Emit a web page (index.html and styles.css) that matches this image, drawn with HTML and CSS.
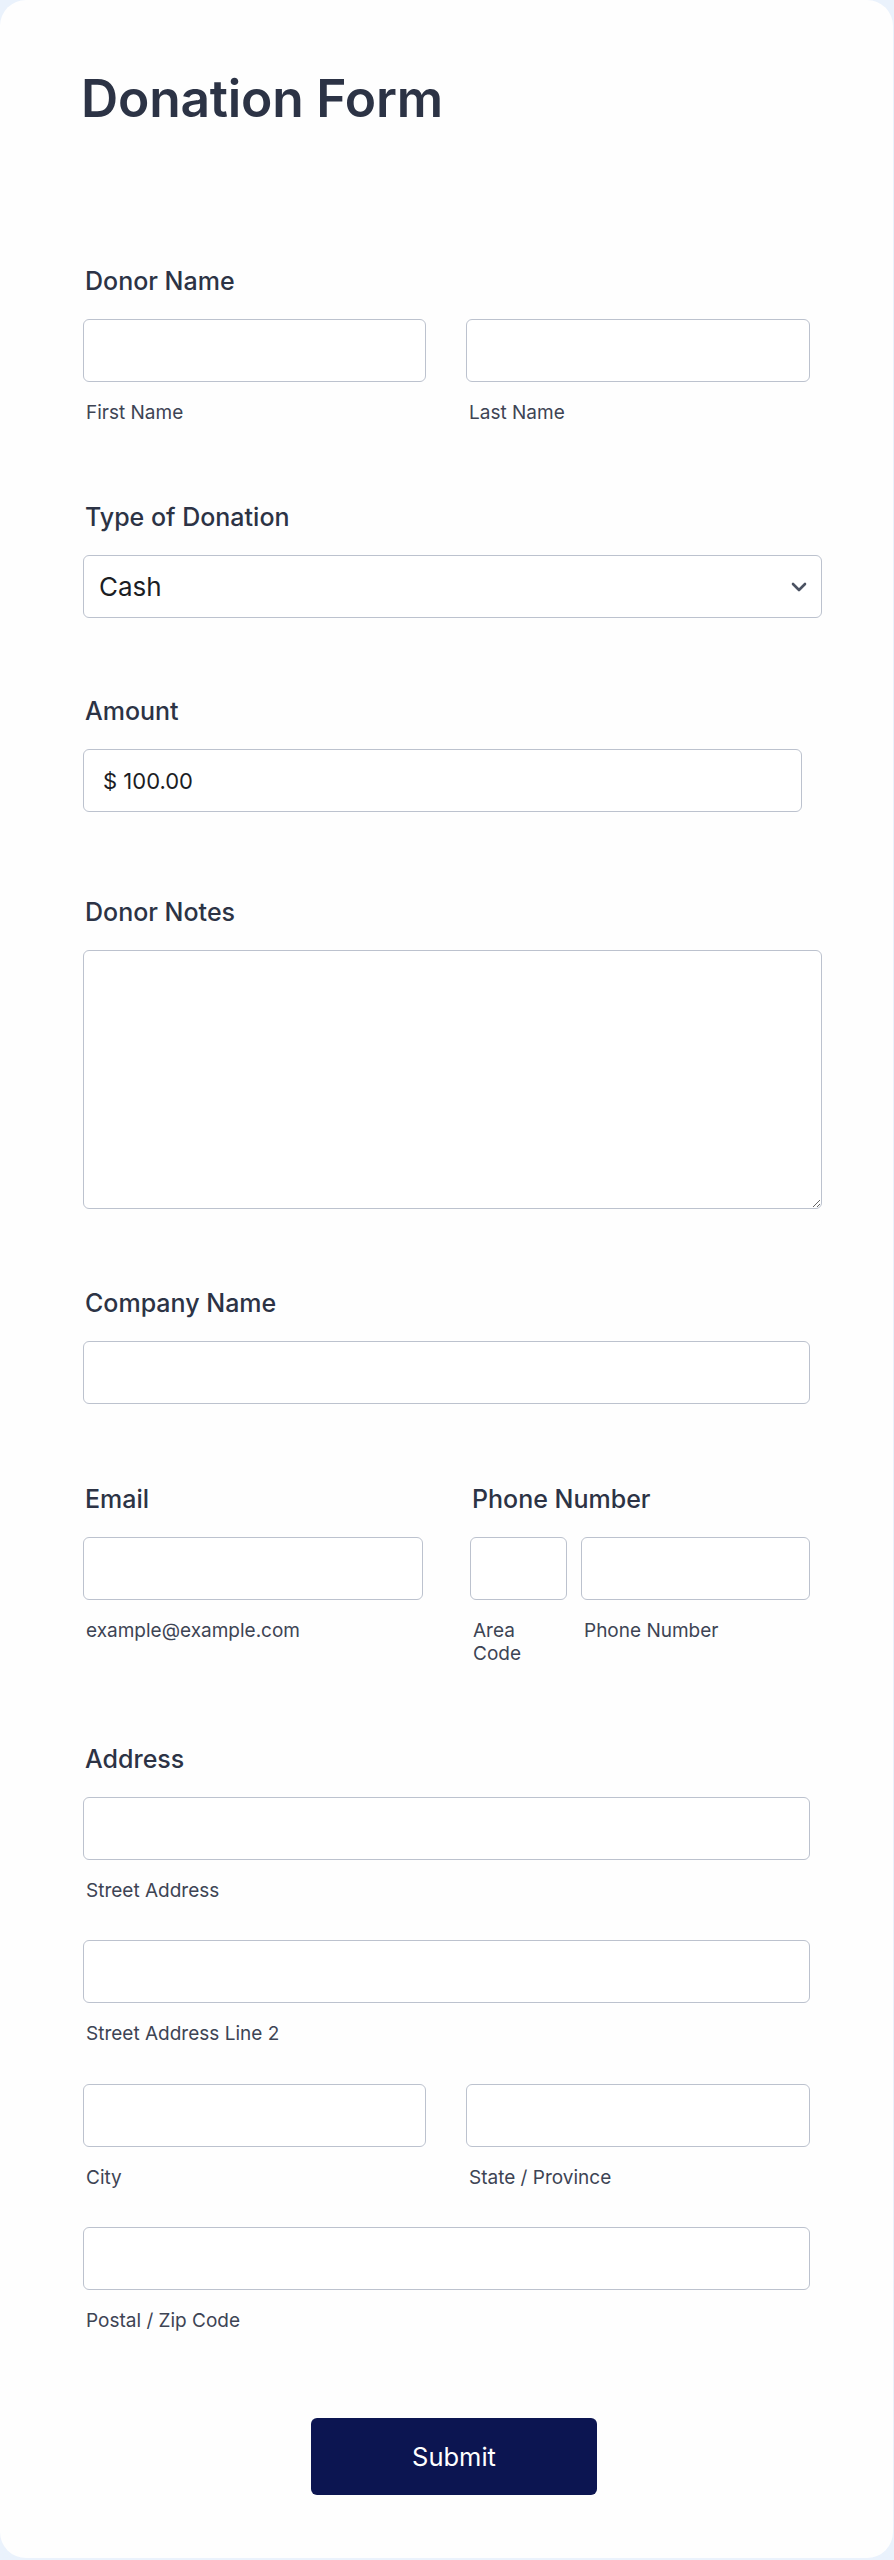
FILE: index.html
```html
<!DOCTYPE html>
<html lang="en">
<head>
<meta charset="utf-8">
<title>Donation Form</title>
<link rel="stylesheet" href="styles.css">
</head>
<body>
<form class="card">
  <h1 class="title">Donation Form</h1>

  <div class="field f-name">
    <label class="label">Donor Name</label>
    <div class="row two">
      <div class="col"><input class="input" type="text"><span class="sub">First Name</span></div>
      <div class="col"><input class="input" type="text"><span class="sub">Last Name</span></div>
    </div>
  </div>

  <div class="field f-type">
    <label class="label">Type of Donation</label>
    <div class="select-wrap">
      <select class="select"><option>Cash</option></select>
      <svg class="chev" width="16" height="10" viewBox="0 0 16 10"><path d="M2 2l6 6 6-6" fill="none" stroke="#4b5262" stroke-width="2.6" stroke-linecap="round" stroke-linejoin="round"/></svg>
    </div>
  </div>

  <div class="field f-amount">
    <label class="label">Amount</label>
    <input class="input amount" type="text" value="$ 100.00">
  </div>

  <div class="field f-notes">
    <label class="label">Donor Notes</label>
    <textarea class="textarea"></textarea>
  </div>

  <div class="field f-company">
    <label class="label">Company Name</label>
    <input class="input wide" type="text">
  </div>

  <div class="field f-contact">
    <div class="contact">
      <div class="email">
        <label class="label">Email</label>
        <input class="input" type="email">
        <span class="sub">example@example.com</span>
      </div>
      <div class="phone">
        <label class="label">Phone Number</label>
        <div class="phone-row">
          <div class="area"><input class="input" type="tel"><span class="sub">Area Code</span></div>
          <div class="num"><input class="input" type="tel"><span class="sub">Phone Number</span></div>
        </div>
      </div>
    </div>
  </div>

  <div class="field f-address">
    <label class="label">Address</label>
    <div class="addr-line"><input class="input wide" type="text"><span class="sub">Street Address</span></div>
    <div class="addr-line"><input class="input wide" type="text"><span class="sub">Street Address Line 2</span></div>
    <div class="addr-line row two">
      <div class="col"><input class="input" type="text"><span class="sub">City</span></div>
      <div class="col"><input class="input" type="text"><span class="sub">State / Province</span></div>
    </div>
    <div class="addr-line"><input class="input wide" type="text"><span class="sub">Postal / Zip Code</span></div>
  </div>

  <div class="submit-row">
    <button class="submit" type="button">Submit</button>
  </div>
</form>
</body>
</html>
```
FILE: styles.css
```css
* { box-sizing: border-box; }

html, body {
  margin: 0;
  padding: 0;
  background: #eaf2fc;
}

body {
  font-family: Inter, "Noto Sans", "Liberation Sans", sans-serif;
  color: #2c3345;
}

.card {
  width: 893px;
  margin: 0;
  background: #fefefe;
  border-radius: 26px;
  padding: 68px 0 63px 83px;
}

.title {
  margin: 0 0 138px -2px;
  font-size: 51.5px;
  line-height: 60px;
  font-weight: 600;
  color: #2c3345;
  letter-spacing: -0.2px;
}

.field { margin-bottom: 79px; }
.f-name { margin-bottom: 77px; }
.f-type { margin-bottom: 78.5px; }
.f-amount { margin-bottom: 85px; }
.f-notes { margin-bottom: 79px; }
.f-company { margin-bottom: 79.5px; }
.f-contact { margin-bottom: 78px; }
.f-address { margin-bottom: 85px; }

.label {
  display: block;
  padding-left: 2px;
  font-size: 25px;
  line-height: 30px;
  font-weight: 500;
  color: #2c3345;
  margin-bottom: 23px;
}

.input, .select, .textarea {
  display: block;
  height: 63px;
  border: 1.5px solid #bcc2ce;
  border-radius: 6px;
  background: #ffffff;
  font-family: inherit;
  color: #1b1d24;
  outline: none;
  margin: 0;
}

.input { width: 100%; padding: 0 16px; font-size: 22px; }
.input.wide { width: 727px; }

.sub {
  display: block;
  margin-top: 19px;
  padding-left: 3px;
  font-size: 19px;
  line-height: 23.5px;
  font-weight: 400;
  color: #3d4454;
}

.row.two {
  display: grid;
  grid-template-columns: 343px 344px;
  column-gap: 40px;
}

.select-wrap {
  position: relative;
  width: 739px;
}

.select {
  width: 739px;
  -webkit-appearance: none;
  appearance: none;
  padding: 0 48px 0 15px;
  font-size: 26px;
}

.chev {
  position: absolute;
  right: 15px;
  top: 27px;
  pointer-events: none;
}

.input.amount {
  width: 719px;
  padding-left: 19px;
  font-size: 22px;
}

.textarea {
  width: 739px;
  height: 259px;
  resize: vertical;
  padding: 12px 16px;
  font-size: 22px;
}

.contact {
  display: flex;
  gap: 47px;
}

.email { width: 340px; }
.phone { width: 340px; }

.phone-row {
  display: flex;
  gap: 14px;
}

.area { width: 97px; }
.num { width: 229px; }

.addr-line { margin-bottom: 38px; }
.addr-line:last-child { margin-bottom: 0; }

.submit-row {
  width: 742px;
  display: flex;
  justify-content: center;
}

.submit {
  width: 286px;
  height: 77px;
  border: none;
  border-radius: 6px;
  background: #0c1551;
  color: #ffffff;
  font-family: inherit;
  font-size: 25.5px;
  font-weight: 400;
  cursor: pointer;
}
```
